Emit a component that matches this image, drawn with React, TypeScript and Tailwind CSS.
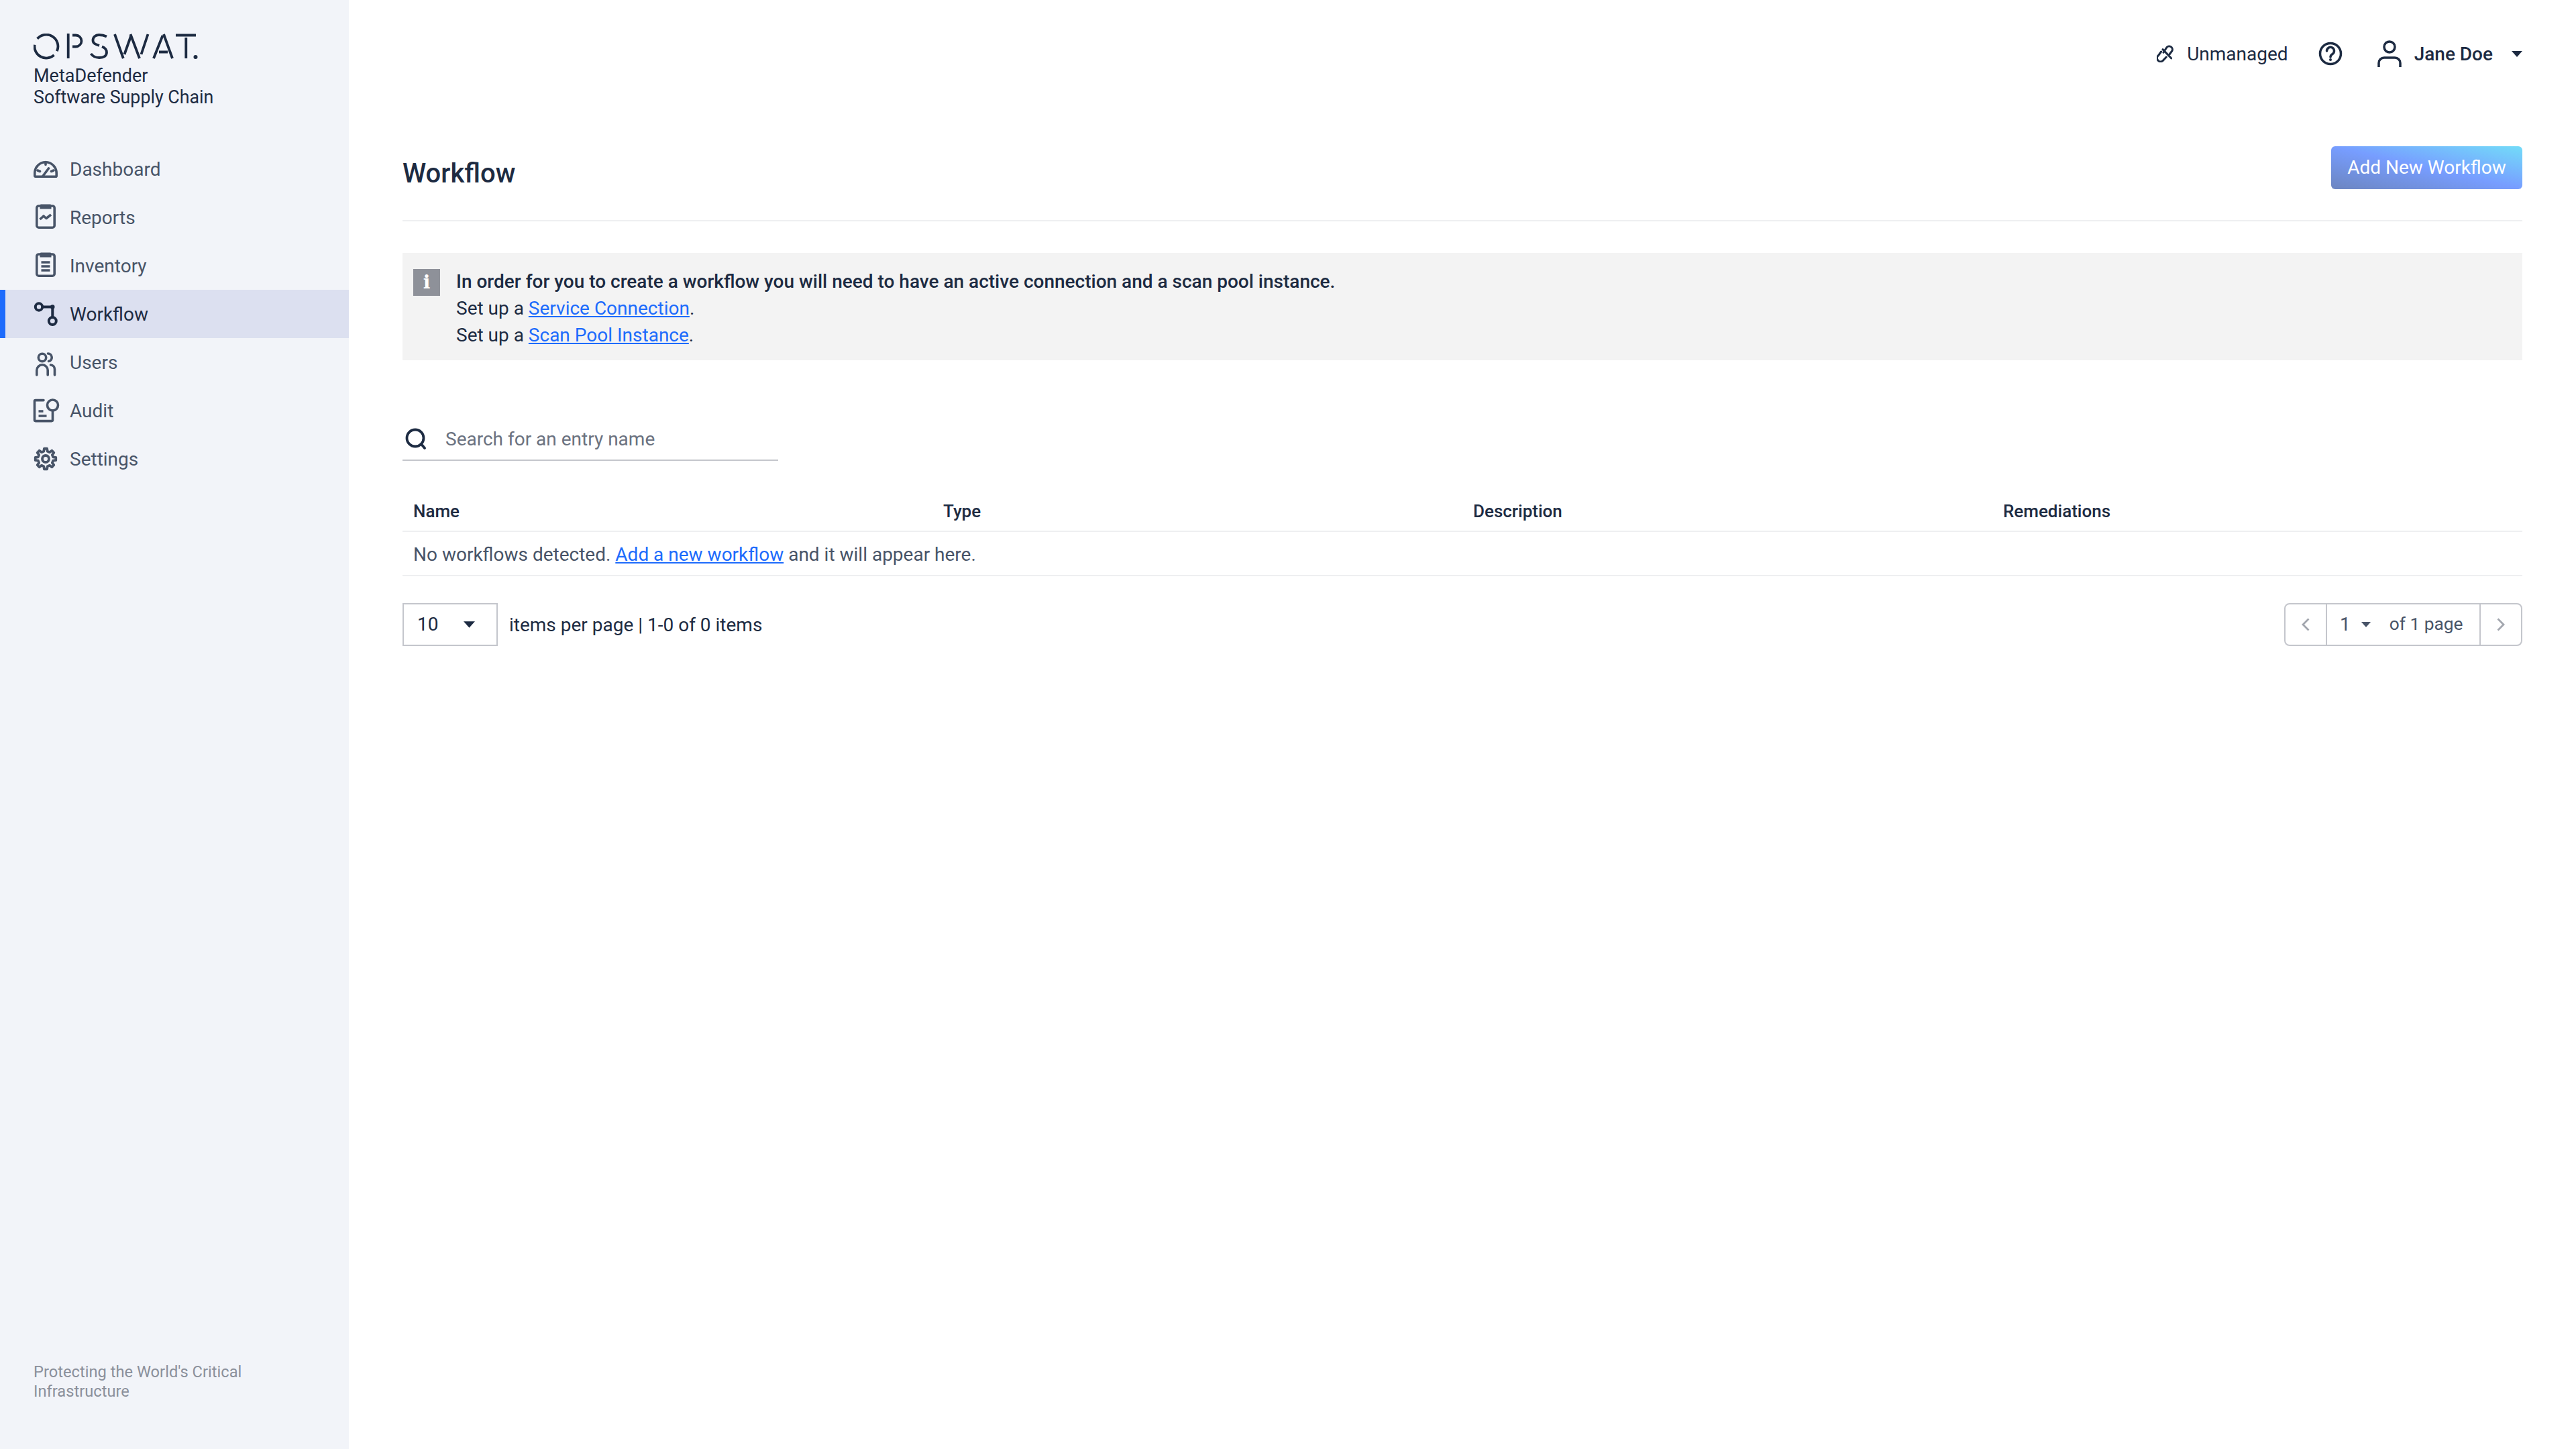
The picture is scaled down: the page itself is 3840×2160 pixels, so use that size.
import React from 'react';

// nav icons, all drawn on a 36 box
const DashboardIcon = () => (
  <svg className="overflow-visible" width="36" height="36" viewBox="0 0 36 36" fill="none" stroke="currentColor" strokeWidth="3.600">
    <path d="M1.800 28.200V24a16.200 16.200 0 0 1 32.400 0v4.200a1 1 0 0 1-1 1H2.800a1 1 0 0 1-1-1Z" strokeLinejoin="round" />
    <path d="M18 7.500v4M6 20l3.500 1.500M30 20l-3.500 1.500M13.500 29l9-12" strokeLinecap="round" />
  </svg>
);

const ReportsIcon = () => (
  <svg className="overflow-visible" width="36" height="36" viewBox="0 2 36 36" fill="none" stroke="currentColor" strokeWidth="3.600">
    <rect x="4.800" y="3" width="26.400" height="32.200" rx="3" />
    <path d="M11 0.500h14a1.500 1.500 0 0 1 1.500 1.500v5.500h-17V2A1.500 1.500 0 0 1 11 0.500Z" fill="currentColor" stroke="none" />
    <path d="M9.500 23l5.500-5 4 3.500 7-5.500" strokeLinejoin="round" />
  </svg>
);

const InventoryIcon = () => (
  <svg className="overflow-visible" width="36" height="36" viewBox="0 2 36 36" fill="none" stroke="currentColor" strokeWidth="3.600">
    <rect x="4.800" y="3" width="26.400" height="32.200" rx="3" />
    <path d="M11 0.500h14a1.500 1.500 0 0 1 1.500 1.500v5.500h-17V2A1.500 1.500 0 0 1 11 0.500Z" fill="currentColor" stroke="none" />
    <path d="M11.500 15h13M11.500 21h13M11.500 27h13" />
  </svg>
);

const WorkflowIcon = () => (
  <svg className="overflow-visible" width="36" height="36" viewBox="0 0 36 36" fill="none" stroke="currentColor" strokeWidth="4">
    <circle cx="8" cy="7.500" r="5.200" />
    <circle cx="28.300" cy="28.500" r="5.500" />
    <path d="M13 7.500h15.300V23" />
    <circle cx="28.300" cy="7.500" r="3.200" fill="currentColor" stroke="none" />
  </svg>
);

const UsersIcon = () => (
  <svg className="overflow-visible" width="36" height="36" viewBox="0 0 36 36" fill="none" stroke="currentColor" strokeWidth="3.600" strokeLinecap="round">
    <circle cx="13" cy="11" r="5.700" />
    <path d="M21.500 5a5.800 5.800 0 0 1 1 11.500" />
    <path d="M4.800 37v-7a8.200 8.200 0 0 1 16.400 0v7" />
    <path d="M25.500 22a6.500 6.500 0 0 1 6 6.500V37" />
  </svg>
);

const AuditIcon = () => (
  <svg className="overflow-visible" width="38" height="36" viewBox="0 0 38 36" fill="none" stroke="currentColor" strokeWidth="3.600">
    <path d="M15 2.600H3a1.500 1.500 0 0 0-1.500 1.500v28a1.500 1.500 0 0 0 1.500 1.500h24a1.500 1.500 0 0 0 1.500-1.500V18" strokeLinecap="round" />
    <circle cx="28.500" cy="10" r="8" />
    <path d="M7.500 19h7M7.500 26h12" />
  </svg>
);

// eight tooth cog, points worked out from radius and angle
const gearPath = () => {
  const pts: string[] = [];
  for (let k = 0; k < 8; k++) {
    const mid = (k * Math.PI) / 4 - Math.PI / 2;
    const spots: [number, number][] = [[11.5, -0.24], [15.4, -0.14], [15.4, 0.14], [11.5, 0.24]];
    spots.forEach(([r, off]) => {
      pts.push(`${(18 + r * Math.cos(mid + off)).toFixed(2)} ${(18 + r * Math.sin(mid + off)).toFixed(2)}`);
    });
  }
  return `M${pts.join('L')}Z`;
};

const SettingsIcon = () => (
  <svg className="overflow-visible" width="36" height="36" viewBox="0 0 36 36" fill="none" stroke="currentColor" strokeWidth="3.800" strokeLinejoin="round">
    <path d={gearPath()} />
    <circle cx="18" cy="18" r="5" />
  </svg>
);

// opswat wordmark with its stencil cuts
const Logo = () => (
  <svg width="246" height="40" viewBox="0 0 246 40" fill="none" stroke="#1d2b42" strokeWidth="3.800">
    <path d="M5.600 7.800A17.500 17.500 0 0 1 34.900 26.300" />
    <path d="M30.600 32.100A17.500 17.500 0 0 1 1.600 16.800" />
    <path d="M51.700 0v37" />
    <path d="M58 2.500h5a8.500 8.500 0 0 1 0 17h-5" />
    <path d="M109 4.500C105 2.500 101 2 97.500 2C92 2 88.500 5.500 88.500 10C88.500 14.500 92 16 98 18" />
    <path d="M102 19.500C107 21.500 109 24 109 28C109 33 105 36 98 36C93 36 88 33.500 85.500 30" />
    <path d="M121 1l12.800 36M135.500 31 145 4M144.500 1 158 37M160.500 31 170.500 1" />
    <path d="M192.500 3 179 37M194 1l13 36M187 27.500H200" />
    <path d="M212 2.500h30M227.300 6v31" />
    <circle cx="241.500" cy="35" r="3" fill="#1d2b42" stroke="none" />
  </svg>
);

const Caret = ({ className }: { className: string }) => (
  <svg className={className} viewBox="0 0 16 9" fill="currentColor">
    <path d="M0 0h16L8 9Z" />
  </svg>
);

const navItems = [
  { label: 'Dashboard', icon: <DashboardIcon /> },
  { label: 'Reports', icon: <ReportsIcon /> },
  { label: 'Inventory', icon: <InventoryIcon /> },
  { label: 'Workflow', icon: <WorkflowIcon />, active: true },
  { label: 'Users', icon: <UsersIcon /> },
  { label: 'Audit', icon: <AuditIcon /> },
  { label: 'Settings', icon: <SettingsIcon /> },
];

const Sidebar = () => (
  <aside className="w-[520px] shrink-0 bg-[#f2f4f9] flex flex-col justify-between pt-[50px] pb-[71px]">
    <div>
      <div className="pl-[50px] text-[#1d2b42]">
        <Logo />
        <div className="text-[27px] leading-[32px] mt-[7px]">MetaDefender</div>
        <div className="text-[26.800px] leading-[32px]">Software Supply Chain</div>
      </div>
      <nav className="mt-[55px]">
        {navItems.map((item) => (
          <div
            key={item.label}
            className={
              item.active
                ? 'h-[72px] flex items-center pl-[42px] border-l-[8px] border-[#1d6bfc] bg-[#dce0f0] text-[#1d2b42]'
                : 'h-[72px] flex items-center pl-[50px] text-[#485468]'
            }
          >
            <span className="w-[36px] h-[36px] flex items-center justify-start shrink-0">{item.icon}</span>
            <span className="ml-[18px] mt-[2px] text-[28px]">{item.label}</span>
          </div>
        ))}
      </nav>
    </div>
    <div className="pl-[50px] pr-[120px] text-[23.700px] leading-[29px] text-[#8b909b]">
      Protecting the World's Critical Infrastructure
    </div>
  </aside>
);

const Header = () => (
  <header className="h-[160px] flex items-center justify-end text-[#1d2b42] text-[28px]">
    <svg width="26" height="26" viewBox="0 0 26 26" fill="none" stroke="currentColor" strokeWidth="3" strokeLinecap="round">
      <path d="M10 11.300 14.300 4.500a4.800 4.800 0 0 1 8.500 4.500L19 14" />
      <path d="M6.600 10 2.500 15.600a4.800 4.800 0 0 0 6.500 8l5.300-5.600" />
      <path d="M9 6.600 21.600 19.800" />
    </svg>
    <span className="ml-[19px] mt-[2px]">Unmanaged</span>
    <svg className="ml-[45px]" width="36" height="36" viewBox="0 0 36 36" fill="none" stroke="currentColor" strokeWidth="3.500">
      <circle cx="18" cy="18" r="15.500" />
      <path d="M12.500 14a5.500 5.500 0 1 1 8.500 4.500c-2 1.200-3 2.200-3 4.500" strokeLinecap="round" />
      <circle cx="18" cy="27" r="2" fill="currentColor" stroke="none" />
    </svg>
    <svg className="ml-[52px]" width="36" height="40" viewBox="0 0 36 40" fill="none" stroke="currentColor" strokeWidth="3.500">
      <circle cx="18" cy="10" r="8" />
      <path d="M2 40v-6a8 8 0 0 1 8-8h16a8 8 0 0 1 8 8v6" />
    </svg>
    <span className="ml-[19px] mt-[2px] font-medium">Jane Doe</span>
    <Caret className="w-[16px] h-[9px] ml-[28px]" />
  </header>
);

const columns = ['Name', 'Type', 'Description', 'Remediations'];

const WorkflowPage = () => (
  <main className="flex-1 min-w-0 px-[80px]">
    <Header />

    <div className="h-[170px] pt-[58px] flex items-start justify-between border-b-2 border-[#eeeff1]">
      <h1 className="text-[40px] leading-[82px] font-medium text-[#1d2b42]">Workflow</h1>
      <button className="w-[285px] h-[64px] rounded-[6px] bg-linear-to-tr from-[#6c85c0] via-[#779dff] to-[#72dcf8] text-white text-[28px]">
        Add New Workflow
      </button>
    </div>

    <div className="mt-[47px] h-[160px] bg-[#f3f3f3] flex pl-[16px] pt-[24px] text-[28px] leading-[40px] text-[#1d2b42]">
      <div className="w-[40px] h-[40px] bg-[#8e9199] flex items-center justify-center text-white text-[28px] font-bold font-['DejaVu_Serif',serif]">
        i
      </div>
      <div className="ml-[24px] -mt-[1px]">
        <div className="font-medium">In order for you to create a workflow you will need to have an active connection and a scan pool instance.</div>
        <div>Set up a <a className="text-[#1d6bfc] underline">Service Connection</a>.</div>
        <div>Set up a <a className="text-[#1d6bfc] underline">Scan Pool Instance</a>.</div>
      </div>
    </div>

    <div className="mt-[85px] w-[560px] h-[65px] flex items-center border-b-2 border-[#c4c6cc]">
      <svg className="ml-[4px]" width="32" height="32" viewBox="0 0 32 32" fill="none" stroke="#1d2b42" strokeWidth="3.800">
        <circle cx="15" cy="15" r="12.500" />
        <path d="M24 24l5 6" strokeLinecap="round" />
      </svg>
      <span className="ml-[28px] pt-[2px] text-[28px] text-[#6b7280]">Search for an entry name</span>
    </div>

    <div className="mt-[46px] h-[60px] grid grid-cols-4 items-center border-b-2 border-[#eeeff1] text-[26px] font-medium text-[#1d2b42]">
      {columns.map((col) => (
        <div key={col} className="pl-[16px]">{col}</div>
      ))}
    </div>
    <div className="h-[66px] flex items-center pl-[16px] pt-[3px] border-b-2 border-[#eeeff1] text-[28px] text-[#485468]">
      <span>No workflows detected.&nbsp;<a className="text-[#1d6bfc] underline">Add a new workflow</a> and it will appear here.</span>
    </div>

    <div className="mt-[40px] flex items-center justify-between text-[28px] text-[#1d2b42]">
      <div className="flex items-center">
        <div className="w-[142px] h-[64px] border-2 border-[#c4c6cc] flex items-center pl-[20px]">
          <span>10</span>
          <Caret className="w-[17px] h-[10px] ml-[38px]" />
        </div>
        <span className="ml-[17px] mt-[2px]">items per page | 1-0 of 0 items</span>
      </div>
      <div className="h-[64px] w-[355px] border-2 border-[#c4c6cc] rounded-[8px] flex items-center text-[26.300px] text-[#485468]">
        <div className="w-[62px] h-full flex items-center justify-center border-r-2 border-[#c4c6cc]">
          <svg width="12" height="20" viewBox="0 0 12 20" fill="none" stroke="#a2a6ae" strokeWidth="2.800"><path d="M10.500 1.500 2 10l8.500 8.500" /></svg>
        </div>
        <div className="flex-1 flex items-center pl-[19px]">
          <span className="text-[28px]">1</span>
          <Caret className="w-[16px] h-[8px] ml-[15px]" />
          <span className="ml-[27px]">of 1 page</span>
        </div>
        <div className="w-[62px] h-full flex items-center justify-center border-l-2 border-[#c4c6cc]">
          <svg width="12" height="20" viewBox="0 0 12 20" fill="none" stroke="#a2a6ae" strokeWidth="2.800"><path d="M1.500 1.500 10 10l-8.500 8.500" /></svg>
        </div>
      </div>
    </div>
  </main>
);

export default function App() {
  return (
    <div className="min-h-screen flex bg-white font-['Roboto',sans-serif]">
      <Sidebar />
      <WorkflowPage />
    </div>
  );
}
